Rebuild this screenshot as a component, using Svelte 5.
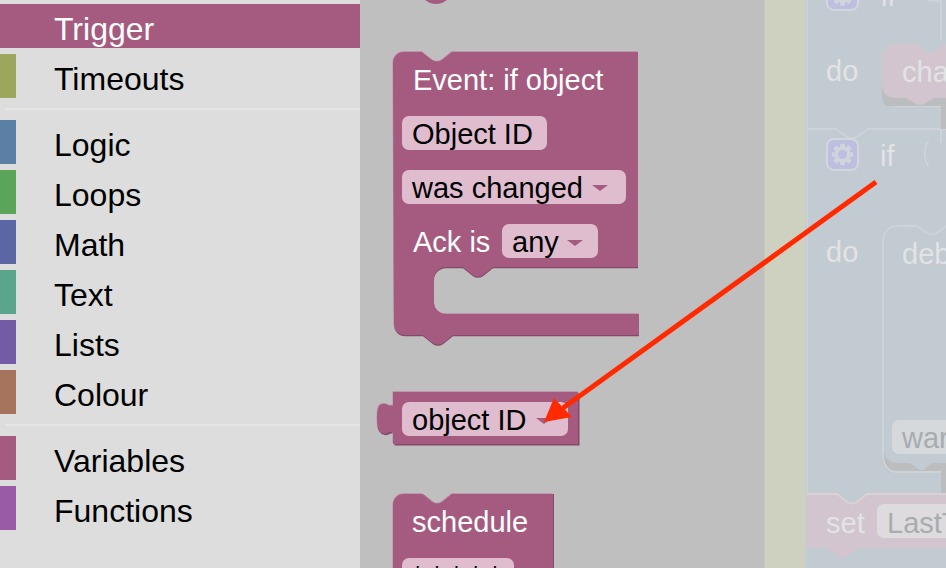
<script>
  const groups = [
    [{ n: 'Trigger', c: '#a55b80', on: true }, { n: 'Timeouts', c: '#9ca65c' }],
    [
      { n: 'Logic', c: '#5b80a5' }, { n: 'Loops', c: '#5ba55b' }, { n: 'Math', c: '#5b67a5' },
      { n: 'Text', c: '#5ba58c' }, { n: 'Lists', c: '#745ba5' }, { n: 'Colour', c: '#a5745b' }
    ],
    [{ n: 'Variables', c: '#a55b80' }, { n: 'Functions', c: '#995ba5' }]
  ];
  const eventBlock = 'M393 63a11 11 0 0 1 11-11h18l10 8q5 3 10 0l10-8h186v215h-145l-10 8q-5 3-10 0l-10-8h-17a12 12 0 0 0-12 12v23a12 12 0 0 0 12 12h193v21h-186l-10 8q-5 3-10 0l-10-8h-18a11 11 0 0 1-11-11z';
  const idBlock = 'M393 392h185v52h-185v-12l-4 0q-4 3-9 0.500q-3-2-3-14q0-12 3-13.500q5-2.500 9 0.500l4 0z';
  const schedBlock = 'M393 505a11 11 0 0 1 11-11h18l10 8q5 3 10 0l10-8h101v80h-160z';
  const bumpTop = 'M425 0h22l-5 3q-6 2-12 0z';

  // Eight-toothed settings gear around (0,0), with a round hole.
  function gearPath() {
    const pts = [];
    for (let i = 0; i < 8; i++) {
      const a = (i * Math.PI) / 4;
      for (const [r, d] of [[8, -0.3], [11, -0.2], [11, 0.2], [8, 0.3]]) {
        pts.push(`${(r * Math.sin(a + d)).toFixed(2)} ${(-r * Math.cos(a + d)).toFixed(2)}`);
      }
    }
    return `M${pts.join('L')}zM4.500 0a4.500 4.500 0 1 0-9 0a4.500 4.500 0 1 0 9 0z`;
  }
  const gear = gearPath();
</script>

<div class="app">
  <aside class="menu">
    {#each groups as g, i}
      {#if i > 0}<div class="sep"></div>{/if}
      {#each g as item}
        <div class="row" class:on={item.on}>
          <span class="swatch" style:background={item.c}></span>
          <span class="label">{item.n}</span>
        </div>
      {/each}
    {/each}
  </aside>

  <div class="stage">
    <svg class="flyout" viewBox="360 0 404 568" aria-label="Block flyout">
      <path class="block" d={bumpTop} />

      <g>
        <path class="shade" d={eventBlock} transform="translate(0 1.200)" />
        <path class="lite" d={eventBlock} transform="translate(-0.500 -0.800)" />
        <path class="block" d={eventBlock} />
        <text class="white" x="413" y="90">Event: if object</text>
        <rect class="field" x="402" y="116" width="145" height="34" rx="7" />
        <text x="412" y="144">Object ID</text>
        <rect class="field" x="402" y="170" width="224" height="34" rx="7" />
        <text x="412" y="198">was changed</text>
        <path class="tri" d="M592 185h16l-8 6z" />
        <text class="white" x="413" y="252">Ack is</text>
        <rect class="field" x="502" y="224" width="96" height="34" rx="7" />
        <text x="512" y="252">any</text>
        <path class="tri" d="M567 240h16l-8 6z" />
      </g>

      <g>
        <path class="shade" d={idBlock} transform="translate(1.500 1.500)" />
        <path class="lite" d={idBlock} transform="translate(-0.500 -0.800)" />
        <path class="block" d={idBlock} />
        <rect class="field" x="402" y="402" width="166" height="34" rx="7" />
        <text x="412" y="430">object ID</text>
        <path class="tri" d="M536 418h16l-8 6z" />
      </g>

      <g>
        <path class="shade" d={schedBlock} transform="translate(1 0)" />
        <path class="lite" d={schedBlock} transform="translate(-0.500 -0.800)" />
        <path class="block" d={schedBlock} />
        <text class="white" x="412" y="532">schedule</text>
        <rect class="field" x="402" y="558" width="112" height="34" rx="7" />
        <text x="412" y="586">* * * * *</text>
      </g>
    </svg>

    <div class="strip"></div>

    <svg class="work" viewBox="807 0 139 568" aria-label="Workspace">
      <path class="out" d="M807 0v494M807 129h29l11 8q5 3 10 0l11-8h78" />
      <path class="out" d="M941 0v40M941 129v14" />
      <rect class="gear-box" x="827" y="-20" width="31" height="30" rx="7" />
      <path class="gear" d={gear} transform="translate(842.500 -5)" />
      <text class="ghost" x="881" y="6">if</text>
      <path class="out" d="M941 2q-8 -2 -13 -2" />

      <text class="ghost" x="826" y="81">do</text>
      <path class="out" d="M883 92v2q0 12 14 12h44" />
      <path class="sh" d="M882 78h64v28h-60q-4-3-4-10z" />
      <rect class="sh" x="941" y="106" width="5" height="23" />
      <path class="pinkfill" d="M882 58a14 14 0 0 1 14-14h20l10 7q5 3 10 0l10-7v54h-12l-10 6q-4 2-8 0l-10-6h-10q-14 0-14-14z" />
      <text class="ghost" x="902" y="82">cha</text>

      <rect class="gear-box" x="827" y="139" width="31" height="31" rx="7" />
      <path class="gear" d={gear} transform="translate(842.500 154.500)" />
      <text class="ghost" x="880" y="166">if</text>
      <path class="out" d="M929 141q-4 1-4 12q0 11 4 13" />

      <text class="ghost" x="826" y="262">do</text>

      <path class="sh" d="M882 440h64v53h-5v-20h-44q-15 0-15-15z" />
      <path class="bg" d="M884 240h62v223h-14l-8 6q-3 2-6 0l-8-6h-12q-14 0-14-14z" />
      <path class="out" d="M883 240a14 14 0 0 1 14-14h20l10 7q5 3 10 0l9-7M883 240v214q0 18 14 18h44" />
      <text class="ghost" x="902" y="264">deb</text>
      <rect class="grey-field" x="892" y="420" width="60" height="34" rx="7" />
      <text class="dim" x="902" y="448">war</text>

      <path class="pinkfill" d="M807 494h30l10 8q5 3 10 0l10-8h79v54h-89l-10 8q-5 3-10 0l-10-8h-20z" />
      <path class="pinkedge" d="M807 494h30l10 8q5 3 10 0l10-8h79" />
      <text class="ghost" x="826" y="533">set</text>
      <rect class="pale-field" x="877" y="504" width="80" height="34" rx="7" />
      <text class="dim" x="887" y="533">LastT</text>
    </svg>

    <svg class="arrow" viewBox="0 0 586 568" aria-label="Arrow">
      <path d="M516 182L203 408" />
      <path class="head" d="M184 422L194 398L212 417z" />
    </svg>
  </div>
</div>

<style>
  :global(body) {
    margin: 0;
    overflow: hidden;
  }

  .app {
    display: flex;
    width: 946px;
    height: 568px;
    overflow: hidden;
    font-family: "Liberation Sans", Arial, sans-serif;
  }

  .menu {
    box-sizing: border-box;
    flex: 0 0 360px;
    height: 568px;
    padding-top: 4px;
    background: #dddddd;
  }

  .row {
    display: flex;
    align-items: center;
    gap: 38px;
    height: 44px;
    margin-bottom: 6px;
    color: #000;
    font-size: 32px;
    line-height: 44px;
  }

  .label {
    padding-top: 6px;
  }

  .row.on {
    background: #a55b80;
    color: #fff;
  }

  .row.on .swatch {
    visibility: hidden;
  }

  .swatch {
    flex: 0 0 16px;
    height: 44px;
  }

  .sep {
    height: 2px;
    margin: 10px 0 10px 5px;
    background: #e6e6e6;
  }

  .stage {
    position: relative;
    display: flex;
    flex: 1;
    min-width: 0;
  }

  .flyout {
    display: block;
    flex: 0 0 404px;
    width: 404px;
    height: 568px;
    background: #bfbfbf;
  }

  .strip {
    box-sizing: border-box;
    flex: 0 0 43px;
    height: 568px;
    border-left: 1px solid #c9cbba;
    border-right: 2px solid #c6ccd0;
    background: #cfd1c0;
  }

  .work {
    display: block;
    flex: 1;
    min-width: 0;
    height: 568px;
    background: #c2cad2;
  }

  .arrow {
    position: absolute;
    inset: 0;
    width: 586px;
    height: 568px;
    pointer-events: none;
  }

  .arrow path {
    fill: none;
    stroke: #ff2a00;
    stroke-width: 5;
  }

  .arrow .head {
    fill: #ff2a00;
    stroke: none;
  }

  svg text {
    font-family: "Liberation Sans", Arial, sans-serif;
    font-size: 29px;
    fill: #000;
  }

  svg text.white {
    fill: #fff;
  }

  svg text.ghost {
    fill: #e2e3e5;
  }

  svg text.dim {
    fill: #a9acae;
  }

  .block,
  .tri {
    fill: #a55b80;
  }

  .lite {
    fill: #c08aa6;
  }

  .shade {
    fill: #84496a;
  }

  .field {
    fill: #dfbdcf;
  }

  .out {
    fill: none;
    stroke: #cdd3d9;
    stroke-width: 2;
  }

  .bg {
    fill: #c2cad2;
  }

  .sh {
    fill: #bcbdbe;
  }

  .pinkfill {
    fill: #d3c5cf;
  }

  .pinkedge {
    fill: none;
    stroke: #dad0d7;
    stroke-width: 2;
  }

  .gear-box {
    fill: #bcbfe0;
    stroke: #d3d7dd;
    stroke-width: 2;
  }

  .gear {
    fill: #d2d4db;
    fill-rule: evenodd;
  }

  .grey-field {
    fill: #d5d9dc;
  }

  .pale-field {
    fill: #dedbdf;
  }
</style>
